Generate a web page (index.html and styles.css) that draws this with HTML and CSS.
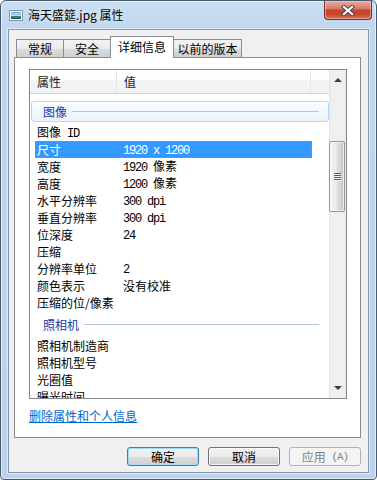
FILE: index.html
```html
<!DOCTYPE html>
<html lang="zh-CN">
<head>
<meta charset="utf-8">
<title>海天盛筵.jpg 属性</title>
<link rel="stylesheet" href="styles.css">
</head>
<body>
<div class="window">
  <div class="titlebar">
    <svg class="ficon" width="14" height="11" viewBox="0 0 14 11">
      <defs>
        <linearGradient id="sky" x1="0" y1="0" x2="0" y2="1">
          <stop offset="0" stop-color="#6fb4e8"/>
          <stop offset="0.55" stop-color="#bfe0f4"/>
          <stop offset="0.6" stop-color="#3c8a8e"/>
          <stop offset="1" stop-color="#1f5660"/>
        </linearGradient>
      </defs>
      <rect x="0.5" y="0.5" width="13" height="10" fill="#fff" stroke="#8c9aa8"/>
      <rect x="2" y="2" width="10" height="7" fill="url(#sky)"/>
    </svg>
    <span class="title">海天盛筵.jpg 属性</span>
    <div class="close">
      <svg width="14" height="11" viewBox="0 0 14 11">
        <path d="M3 2 L11 9 M11 2 L3 9" stroke="#4a4a4a" stroke-width="4.2" stroke-linecap="square"/>
        <path d="M3 2 L11 9 M11 2 L3 9" stroke="#fff" stroke-width="2.2" stroke-linecap="square"/>
      </svg>
    </div>
  </div>
  <div class="client">
    <div class="tabs">
      <div class="tab t1">常规</div>
      <div class="tab t2">安全</div>
      <div class="tab t3 active">详细信息</div>
      <div class="tab t4">以前的版本</div>
    </div>
    <div class="panel">
      <div class="list">
        <div class="list-main">
          <div class="lhead">
            <div class="hc c1">属性</div>
            <div class="hc c2">值</div>
            <div class="hc c3"></div>
          </div>
          <div class="lbody">
            <div class="group hot"><span class="gtext">图像</span><i class="gline"></i></div>
            <div class="row"><span class="k">图像<span class="m"> ID</span></span><span class="v"></span></div>
            <div class="row sel"><span class="k">尺寸</span><span class="v"><span class="m">1920 x 1200</span></span></div>
            <div class="row"><span class="k">宽度</span><span class="v"><span class="m">1920 </span>像素</span></div>
            <div class="row"><span class="k">高度</span><span class="v"><span class="m">1200 </span>像素</span></div>
            <div class="row"><span class="k">水平分辨率</span><span class="v"><span class="m">300 dpi</span></span></div>
            <div class="row"><span class="k">垂直分辨率</span><span class="v"><span class="m">300 dpi</span></span></div>
            <div class="row"><span class="k">位深度</span><span class="v"><span class="m">24</span></span></div>
            <div class="row"><span class="k">压缩</span><span class="v"></span></div>
            <div class="row"><span class="k">分辨率单位</span><span class="v"><span class="m">2</span></span></div>
            <div class="row"><span class="k">颜色表示</span><span class="v">没有校准</span></div>
            <div class="row"><span class="k">压缩的位/像素</span><span class="v"></span></div>
            <div class="group second"><span class="gtext">照相机</span><i class="gline"></i></div>
            <div class="row"><span class="k">照相机制造商</span><span class="v"></span></div>
            <div class="row"><span class="k">照相机型号</span><span class="v"></span></div>
            <div class="row"><span class="k">光圈值</span><span class="v"></span></div>
            <div class="row"><span class="k">曝光时间</span><span class="v"></span></div>
          </div>
        </div>
        <div class="vscroll">
          <div class="sbtn"><i class="arrow up"></i></div>
          <div class="track">
            <div class="thumb"><i class="grip"></i></div>
          </div>
          <div class="sbtn"><i class="arrow down"></i></div>
        </div>
      </div>
      <a class="link" href="#">删除属性和个人信息</a>
    </div>
    <div class="buttons">
      <div class="btn focus">确定</div>
      <div class="btn">取消</div>
      <div class="btn disabled">应用<span class="m"> (A)</span></div>
    </div>
  </div>
</div>
</body>
</html>
```

FILE: styles.css
```css
html, body {
  margin: 0;
  padding: 0;
  background: #ffffff;
}
body {
  font-family: "Noto Sans CJK SC", "Liberation Sans", sans-serif;
  font-size: 12px;
  color: #000;
  width: 377px;
  height: 480px;
  overflow: hidden;
}
.window {
  width: 377px;
  height: 480px;
  box-sizing: border-box;
  border: 1px solid #4a5a6e;
  border-radius: 6px 6px 4px 4px;
  background: linear-gradient(180deg, #c9def3 0, #bfd6ef 28px, #bad2eb 100%);
  box-shadow: inset 0 0 0 1px rgba(255, 255, 255, 0.6);
  padding: 0 7px 6px 7px;
  display: flex;
  flex-direction: column;
}
.titlebar {
  height: 28px;
  display: flex;
  align-items: center;
  flex: none;
}
.ficon {
  margin-left: 1px;
  flex: none;
}
.title {
  margin-left: 5px;
  font-size: 12px;
  line-height: 16px;
  color: #000;
  text-shadow: 0 0 6px rgba(255, 255, 255, 0.9);
}
.close {
  margin-left: auto;
  margin-right: -3px;
  align-self: flex-start;
  width: 48px;
  height: 19px;
  box-sizing: border-box;
  border: 1px solid #7a3128;
  border-top: none;
  border-radius: 0 0 4px 4px;
  background: linear-gradient(180deg, #e9a99b 0, #d9826f 40%, #c4432c 52%, #c9472d 75%, #d97a52 100%);
  box-shadow: inset 0 0 0 1px rgba(255, 220, 210, 0.45);
  display: flex;
  align-items: center;
  justify-content: center;
}
.client {
  flex: 1;
  background: #f0f0f0;
  border: 1px solid #8596aa;
  box-shadow: 0 0 0 1px rgba(255, 255, 255, 0.55);
  padding: 6px 7px 0 5px;
  display: flex;
  flex-direction: column;
}
.tabs {
  height: 21px;
  display: flex;
  align-items: flex-end;
  padding-left: 2px;
  flex: none;
}
.tab {
  height: 18px;
  box-sizing: border-box;
  border: 1px solid #898c95;
  border-bottom: none;
  margin-left: -1px;
  background: linear-gradient(180deg, #f3f3f3 0, #ebebeb 50%, #dddddd 50%, #cfcfcf 100%);
  display: flex;
  align-items: center;
  justify-content: center;
  line-height: 14px;
}
.tab.t1 { width: 48px; margin-left: 0; }
.tab.t2 { width: 48px; }
.tab.t3 { width: 64px; }
.tab.t4 { width: 69px; }
.tab.active {
  height: 22px;
  margin-bottom: -1px;
  background: #ffffff;
  position: relative;
  z-index: 1;
  padding-bottom: 2px;
}
.panel {
  height: 381px;
  box-sizing: border-box;
  border: 1px solid #898c95;
  background: #ffffff;
  padding: 11px 13px 0 14px;
  flex: none;
  display: flex;
  flex-direction: column;
}
.list {
  height: 330px;
  box-sizing: border-box;
  border: 1px solid #828790;
  display: flex;
  flex: none;
  background: #fff;
}
.list-main {
  flex: 1;
  display: flex;
  flex-direction: column;
  overflow: hidden;
}
.lhead {
  height: 24px;
  box-sizing: border-box;
  border-bottom: 1px solid #d5d5d5;
  background: linear-gradient(180deg, #ffffff 0, #ffffff 40%, #f3f4f6 45%, #f1f2f4 100%);
  display: flex;
  flex: none;
}
.hc {
  box-sizing: border-box;
  padding-left: 7px;
  line-height: 23px;
  color: #1a1a1a;
}
.hc.c1 { width: 87px; border-right: 1px solid #e3e5e8; }
.hc.c2 { width: 194px; border-right: 1px solid #e3e5e8; }
.hc.c3 { flex: 1; }
.lbody {
  flex: 1;
  overflow: hidden;
  padding-top: 7px;
}
.group {
  height: 21px;
  box-sizing: border-box;
  margin: 0 0 2px 1px;
  border: 1px solid transparent;
  border-radius: 3px;
  display: flex;
  align-items: center;
  padding: 0 9px 0 11px;
}
.group.second {
  margin-top: 3px;
}
.group.hot {
  border-color: #b8d6fb;
  background: linear-gradient(180deg, #fbfdff 0, #f0f7fe 60%, #e9f3fd 100%);
}
.gtext {
  color: #2437a6;
  line-height: 16px;
}
.gline {
  flex: 1;
  height: 1px;
  background: #b4c6df;
  margin-left: 5px;
}
.row {
  height: 17px;
  line-height: 17px;
  box-sizing: border-box;
  margin: 0 17px 0 5px;
  display: flex;
  align-items: center;
  white-space: nowrap;
}
.row .k {
  width: 88px;
  box-sizing: border-box;
  padding-left: 2px;
  flex: none;
}
.row .v {
  flex: 1;
}
.row.sel {
  background: #3399ff;
  color: #ffffff;
  outline: 1px dotted #c8863a;
  outline-offset: -1px;
}
.m {
  font-family: "Liberation Mono", monospace;
  font-size: 12px;
  letter-spacing: -1.2px;
  white-space: pre;
}
.vscroll {
  width: 17px;
  flex: none;
  display: flex;
  flex-direction: column;
  background: linear-gradient(90deg, #e2e2e2 0, #efefef 2px, #f0f0f0 14px, #e7e7e7 100%);
}
.sbtn {
  height: 17px;
  flex: none;
  display: flex;
  align-items: center;
  justify-content: center;
}
.arrow {
  width: 0;
  height: 0;
  border-left: 4px solid transparent;
  border-right: 4px solid transparent;
}
.arrow.up {
  border-bottom: 4px solid #3d3d3d;
  margin-top: 3px;
}
.arrow.down {
  border-top: 4px solid #3d3d3d;
  margin-bottom: 3px;
}
.track {
  flex: 1;
}
.thumb {
  margin-top: 54px;
  height: 71px;
  box-sizing: border-box;
  border: 1px solid #959595;
  border-radius: 2px;
  margin-right: 1px;
  background: linear-gradient(90deg, #f4f4f4 0, #ececec 40%, #dcdcdc 55%, #cfcfcf 85%, #bdbdbd 100%);
  box-shadow: inset 0 0 0 1px rgba(255, 255, 255, 0.7);
  display: flex;
  align-items: center;
  justify-content: center;
}
.grip {
  width: 7px;
  height: 8px;
  background: repeating-linear-gradient(180deg, #5c5c5c 0, #5c5c5c 1px, #f4f4f4 1px, #f4f4f4 2px);
}
.link {
  display: block;
  align-self: flex-start;
  margin-top: 9px;
  line-height: 16px;
  color: #0066cc;
  text-decoration: underline;
}
.buttons {
  display: flex;
  justify-content: flex-end;
  gap: 9px;
  margin-top: 9px;
  flex: none;
}
.btn {
  width: 72px;
  height: 19px;
  box-sizing: border-box;
  border: 1px solid #707070;
  border-radius: 3px;
  background: linear-gradient(180deg, #f2f2f2 0, #ebebeb 50%, #dddddd 50%, #cfcfcf 100%);
  box-shadow: inset 0 0 0 1px rgba(255, 255, 255, 0.75);
  display: flex;
  align-items: center;
  justify-content: center;
  line-height: 14px;
}
.btn.focus {
  border-color: #3c7fb1;
  box-shadow: inset 0 0 0 1px #9fdcf7;
}
.btn.disabled {
  border-color: #adb2b5;
  background: #f4f4f4;
  box-shadow: none;
  color: #838383;
}
.btn .m {
  font-size: 11px;
  letter-spacing: -1px;
}
```
